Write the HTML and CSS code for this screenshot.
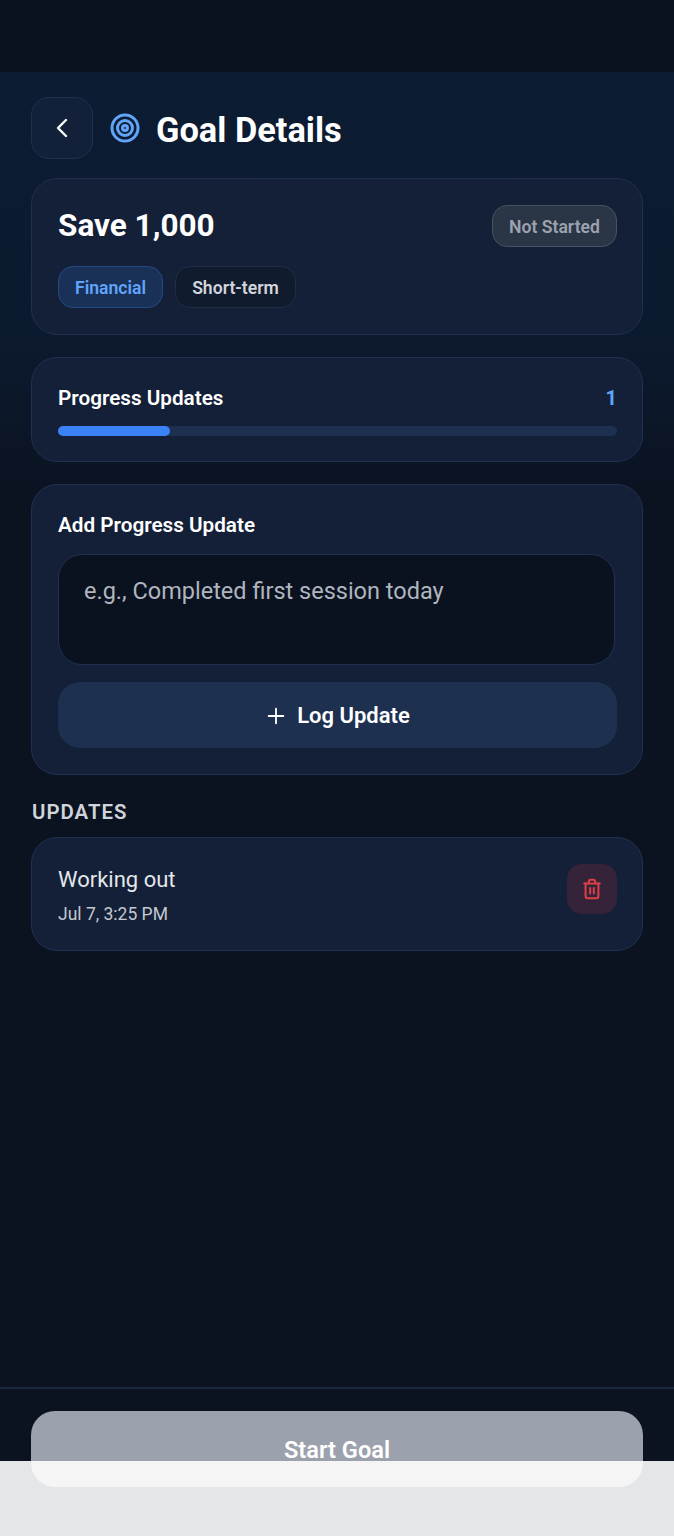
FILE: index.html
```html
<!DOCTYPE html>
<html lang="en">
<head>
  <meta charset="UTF-8">
  <meta name="viewport" content="width=device-width, initial-scale=1.0">
  <title>Goal Details</title>
  <link rel="stylesheet" href="styles.css">
</head>
<body>
  <div class="statusBar"></div>

  <main class="page">
    <header class="topBar">
      <button class="backBtn" aria-label="Back">
        <svg width="32" height="32" viewBox="0 0 24 24" fill="none" stroke="#fff" stroke-width="1.8" stroke-linecap="round" stroke-linejoin="round"><path d="M15 18l-6-6 6-6"/></svg>
      </button>
      <svg class="goalIcon" width="30" height="30" viewBox="0 0 30 30" fill="none" stroke="#60a5fa" stroke-width="3"><circle cx="15" cy="15" r="13"/><circle cx="15" cy="15" r="7.5"/><circle cx="15" cy="15" r="2.5"/></svg>
      <h1 class="pageTitle">Goal Details</h1>
    </header>

    <section class="card summaryCard">
      <div class="summaryTop">
        <h2 class="goalName">Save 1,000</h2>
        <span class="statusBadge">Not Started</span>
      </div>
      <div class="tagRow">
        <span class="tag tagBlue">Financial</span>
        <span class="tag tagDark">Short-term</span>
      </div>
    </section>

    <section class="card progressCard">
      <div class="progressHead">
        <span class="cardLabel">Progress Updates</span>
        <span class="progressCount">1</span>
      </div>
      <div class="progressTrack">
        <div class="progressFill" style="width: 20%"></div>
      </div>
    </section>

    <section class="card addCard">
      <label class="cardLabel" for="updateText">Add Progress Update</label>
      <textarea id="updateText" class="updateInput" placeholder="e.g., Completed first session today"></textarea>
      <button class="logBtn">
        <svg width="22" height="22" viewBox="0 0 24 24" fill="none" stroke="#fff" stroke-width="2" stroke-linecap="round"><path d="M12 4v16M4 12h16"/></svg>
        Log Update
      </button>
    </section>

    <h3 class="sectionTitle">UPDATES</h3>

    <section class="card updateCard">
      <div>
        <p class="updateName">Working out</p>
        <p class="updateTime">Jul 7, 3:25 PM</p>
      </div>
      <button class="deleteBtn" aria-label="Delete">
        <svg width="22" height="22" viewBox="0 0 24 24" fill="none" stroke="#dc3f48" stroke-width="2.2" stroke-linecap="round" stroke-linejoin="round"><path d="M3.5 6h17"/><path d="M19 6v14a2 2 0 0 1-2 2H7a2 2 0 0 1-2-2V6"/><path d="M8.5 6V4a2 2 0 0 1 2-2h3a2 2 0 0 1 2 2v2"/><path d="M10 11v6"/><path d="M14 11v6"/></svg>
      </button>
    </section>
  </main>

  <footer class="bottomBar">
    <button class="startBtn">Start Goal</button>
  </footer>

  <div class="navOverlay"></div>
</body>
</html>
```

FILE: styles.css
```css
* {
  box-sizing: border-box;
}

body {
  position: relative;
  display: flex;
  flex-direction: column;
  width: 100%;
  height: 100vh;
  margin: 0;
  overflow: hidden;
  background-color: #0b1321;
  font-family: Roboto, "Noto Sans", sans-serif;
  color: #fff;
}

h1, h2, h3, p {
  margin: 0;
}

button {
  border: 0;
  font-family: inherit;
}

.statusBar {
  height: 72px;
  flex-shrink: 0;
  background-color: #0a1220;
}

.page {
  flex: 1;
  display: flex;
  flex-direction: column;
  padding: 25px 31px 0;
  background: linear-gradient(180deg, #0c1c32 0%, #0c1a2f 20%, #0b1321 32%);
}

.topBar {
  display: flex;
  align-items: center;
  margin-bottom: 19px;
}

.backBtn {
  display: flex;
  align-items: center;
  justify-content: center;
  width: 62px;
  height: 62px;
  padding: 0;
  border: 1px solid #1f3050;
  border-radius: 18px;
  background-color: #13203a;
}

.goalIcon {
  margin-left: 17px;
  margin-right: 16px;
}

.pageTitle {
  margin-top: 3px;
  font-size: 34.4px;
  font-weight: 700;
  line-height: 40px;
}

.card {
  margin-bottom: 22px;
  padding: 26px 25px 26px 26px;
  border: 1.5px solid #1f3050;
  border-radius: 26px;
  background-color: #132038;
}

.summaryCard {
  height: 157px;
}

.summaryTop {
  display: flex;
  justify-content: space-between;
  align-items: center;
  height: 42px;
}

.goalName {
  margin-top: -2px;
  font-size: 31.5px;
  font-weight: 700;
}

.statusBadge {
  display: flex;
  align-items: center;
  justify-content: center;
  width: 125px;
  height: 42px;
  padding-top: 2px;
  border: 1.5px solid #465161;
  border-radius: 15px;
  background-color: #2a3545;
  color: #9ca3af;
  font-size: 17.6px;
  font-weight: 600;
}

.tagRow {
  display: flex;
  gap: 12px;
  margin-top: 19px;
}

.tag {
  display: flex;
  align-items: center;
  height: 42px;
  padding: 2px 16px 0;
  border-radius: 15px;
  font-size: 17.6px;
  font-weight: 600;
}

.tagBlue {
  border: 1.5px solid #234a85;
  background-color: #1a3157;
  color: #60a5fa;
}

.tagDark {
  border: 1.5px solid #1f2d47;
  background-color: #111b2e;
  color: #d1d5db;
}

.progressCard {
  height: 105px;
}

.progressHead {
  display: flex;
  justify-content: space-between;
  align-items: center;
  height: 28px;
}

.cardLabel {
  font-size: 20.7px;
  font-weight: 600;
}

.progressCount {
  font-size: 20px;
  font-weight: 700;
  color: #60a5fa;
}

.progressTrack {
  height: 10px;
  margin-top: 14px;
  border-radius: 5px;
  background-color: #1e3050;
}

.progressFill {
  height: 100%;
  border-radius: 5px;
  background-color: #3b82f6;
}

.addCard {
  display: flex;
  flex-direction: column;
  height: 291px;
}

.addCard .cardLabel {
  line-height: 28px;
}

.updateInput {
  display: block;
  flex-shrink: 0;
  width: 557px;
  height: 111px;
  margin-top: 15px;
  padding: 20px 25px;
  border: 1.5px solid #1f3050;
  border-radius: 24px;
  outline: 0;
  resize: none;
  background-color: #0a1220;
  color: #fff;
  font-family: inherit;
  font-size: 23.5px;
  line-height: 32px;
}

.updateInput::placeholder {
  color: #b0b5bf;
  opacity: 1;
}

.logBtn {
  display: flex;
  flex-shrink: 0;
  align-items: center;
  justify-content: center;
  gap: 10px;
  height: 66px;
  margin-top: 17px;
  padding-top: 2px;
  border-radius: 22px;
  background-color: #1e3050;
  color: #fff;
  font-size: 22px;
  font-weight: 600;
}

.sectionTitle {
  margin-top: 2px;
  margin-bottom: 12px;
  padding-left: 1px;
  font-size: 20.4px;
  font-weight: 600;
  line-height: 26px;
  letter-spacing: 1px;
  color: #d1d5db;
}

.updateCard {
  display: flex;
  justify-content: space-between;
  align-items: flex-start;
  height: 114px;
  margin-bottom: 0;
}

.updateName {
  padding-top: 1px;
  font-size: 22px;
  line-height: 30px;
  color: #e5e7eb;
}

.updateTime {
  margin-top: 8px;
  font-size: 17.5px;
  line-height: 22px;
  color: #c4c8cf;
}

.deleteBtn {
  display: flex;
  align-items: center;
  justify-content: center;
  width: 50px;
  height: 50px;
  padding: 0;
  border-radius: 15px;
  background-color: #35233a;
}

.bottomBar {
  flex-shrink: 0;
  height: 149px;
  padding: 22px 31px 0;
  border-top: 2px solid #18263f;
  background-color: #0b1321;
}

.startBtn {
  display: block;
  width: 100%;
  height: 76px;
  padding-top: 3px;
  border-radius: 24px;
  background-color: #9ca2ad;
  color: #fff;
  font-size: 23.6px;
  font-weight: 600;
}

.navOverlay {
  position: absolute;
  left: 0;
  right: 0;
  bottom: 0;
  height: 75px;
  background-color: rgba(255, 255, 255, 0.895);
}
```
